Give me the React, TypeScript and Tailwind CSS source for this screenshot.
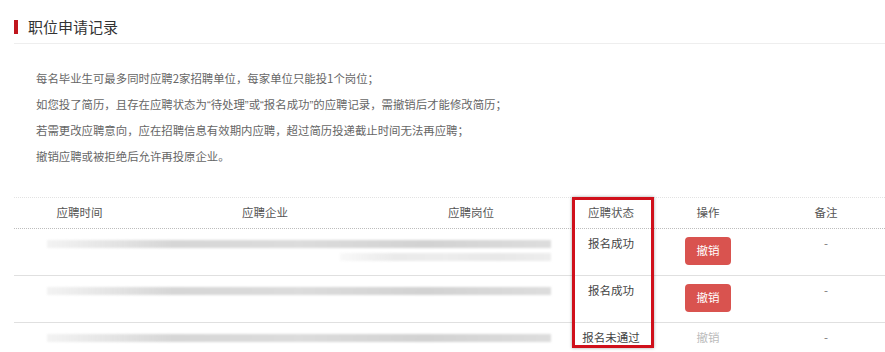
const cols = "grid grid-cols-[131px_240px_172px_108px_86px_150px]";

// narrow western quotes, as in the original page
const Q = ({ children }: { children: string }) => (
  <span className="font-['Liberation_Sans',sans-serif]">{children}</span>
);

const notes = [
  <>每名毕业生可最多同时应聘2家招聘单位，每家单位只能投1个岗位；</>,
  <>
    如您投了简历，且存在应聘状态为<Q>“</Q>待处理<Q>”</Q>或<Q>“</Q>报名成功<Q>”</Q>的应聘记录，需撤销后才能修改简历；
  </>,
  <>若需更改应聘意向，应在招聘信息有效期内应聘，超过简历投递截止时间无法再应聘；</>,
  <>撤销应聘或被拒绝后允许再投原企业。</>,
];

const rows = [
  { status: "报名成功", canCancel: true, second: true },
  { status: "报名成功", canCancel: true, second: false },
  { status: "报名未通过", canCancel: false, second: false },
];

// blurred placeholder standing in for the hidden row data
const Blur = ({ className }: { className: string }) => (
  <div
    className={`h-[8px] blur-[1px] bg-[linear-gradient(to_right,rgba(215,215,215,0.3),#d6d6d6_25%,#dcdcdc_50%,#d2d2d2_75%,#dddddd)] ${className}`}
  ></div>
);

const App = () => {
  return (
    <div className="w-[885px] h-[352px] overflow-hidden bg-white font-['Noto_Sans_CJK_SC',sans-serif]">
      {/* Title */}
      <div className="ml-[14px] pt-[17px] h-[44px] border-b border-[#eeeeee] flex items-start">
        <div className="flex items-center h-[18px] mt-[1px]">
          <span className="w-[4px] h-[14px] bg-[#c0161d]"></span>
          <span className="ml-[10px] text-[15px] leading-[18px] text-[#333]">
            职位申请记录
          </span>
        </div>
      </div>

      {/* Notes */}
      <div className="pl-[36px] pt-[22px] text-[11.4px] leading-[25.5px] text-[#666]">
        {notes.map((n, i) => (
          <p key={i}>{n}</p>
        ))}
      </div>

      {/* Table */}
      <div className="relative ml-[14px] mt-[28px]">
        <div
          className={`${cols} h-[32px] items-center border-t border-b border-dotted border-t-[#e2e2e2] border-b-[#bdbdbd] text-[11.5px] text-[#555] text-center`}
        >
          <div>应聘时间</div>
          <div>应聘企业</div>
          <div>应聘岗位</div>
          <div>应聘状态</div>
          <div>操作</div>
          <div>备注</div>
        </div>

        {rows.map((r, i) => (
          <div
            key={i}
            className={`${cols} h-[47px] border-b border-[#e0e0e0] text-[11.5px] text-center`}
          >
            <div className="col-span-3 pt-[11px] pl-[33px]">
              <Blur className="w-[504px]" />
              {r.second && <Blur className="w-[211px] ml-[293px] mt-[5px] opacity-50" />}
            </div>
            <div className="pt-[6px] leading-[16px] text-[#444]">{r.status}</div>
            <div className="flex justify-center">
              {r.canCancel ? (
                <button className="mt-[8px] w-[46px] h-[28px] rounded-[4px] bg-[#d9534f] text-white text-[11.5px]">
                  撤销
                </button>
              ) : (
                <span className="pt-[6px] leading-[16px] text-[#bbbbbb]">撤销</span>
              )}
            </div>
            <div className="pt-[6px] leading-[16px] text-[#777]">-</div>
          </div>
        ))}

        {/* highlight box over the status column */}
        <div className="absolute left-[558px] top-0 w-[82px] h-[151px] border-[3px] border-[#d0101b] shadow-[0_0_3px_rgba(0,0,0,0.35)]"></div>
      </div>
    </div>
  );
};

export default App;
